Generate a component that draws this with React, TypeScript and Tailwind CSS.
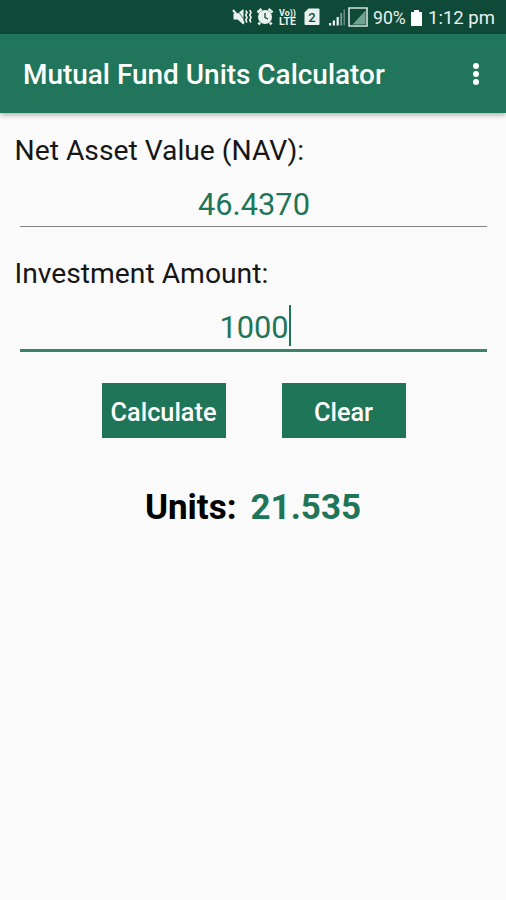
function StatusIcons() {
  return (
    <svg width={137} height={22} viewBox="231 7 137 22" fill="#e9f2ee">
      {/* muted + vibrate */}
      <path d="M233.500 14.500h4l6-4.500v15.500l-6-5h-4z" />
      <path d="M236 9.500l8.500 11.500" stroke="#0f4a38" strokeWidth={0.7} />
      <path d="M233 11l11 13.500" stroke="#e9f2ee" strokeWidth={2} />
      <path d="M245.800 11.500l1.200 2-1.200 2.500 1.200 2.500-1.200 2.500 1.200 2.500M249.800 11l1.200 2.500-1.200 2.500 1.200 2.500-1.200 2.500 1.200 2.500" fill="none" stroke="#e9f2ee" strokeWidth={1.700} />
      {/* alarm */}
      <circle cx={265} cy={18} r={7} />
      <path d="M257.500 13.500l4-3.500M272.500 13.500l-4-3.500M260 23.500l-1.500 2M270 23.500l1.500 2" stroke="#e9f2ee" strokeWidth={2.600} />
      <path d="M265 14v4.500l3 1.500" fill="none" stroke="#0f4a38" strokeWidth={1.3} />
      {/* volte */}
      <text x={279} y={16.500} fontSize={8.500} fontWeight={700} fontFamily="Roboto, sans-serif" textLength={17} lengthAdjust="spacingAndGlyphs">Vo))</text>
      <text x={279} y={26.300} fontSize={10} fontWeight={700} fontFamily="Roboto, sans-serif" textLength={17} lengthAdjust="spacingAndGlyphs">LTE</text>
      {/* sim 2 */}
      <path d="M308.500 9.500h10q1 0 1 1v14.500q0 1-1 1h-13q-1 0-1-1V13.500z" />
      <text x={312} y={22.500} fontSize={13} fontWeight={500} fontFamily="Roboto, sans-serif" textAnchor="middle" fill="#0f4a38">2</text>
      {/* signal bars */}
      <path d="M329 24h2.200v2.500H329zM332.800 21.500h2.200v5h-2.200zM336.600 18h2.200v8.500h-2.200z" />
      <path d="M340.300 14h1.800V26.500h-1.800zM343.600 10.500h1.200V26.500h-1.200z" opacity={0.5} />
      <path d="M349 9h18v18h-18z" fill="none" stroke="#d5e3dd" strokeWidth={1.600} />
      <path d="M352.500 25.500l13-14v14z" fill="#72a28f" />
    </svg>
  );
}

function StatusBar() {
  return (
    <div className="flex h-[34px] items-center bg-[#0f4a38] pl-[231px] text-[#e9f2ee]">
      <StatusIcons />
      <span className="ml-[5px] w-[34px] origin-left scale-x-[0.93] pt-[2px] text-[19px] leading-[34px]">90%</span>
      <svg className="mt-[2px] ml-[4px]" width={11} height={16} viewBox="0 0 11 16" fill="#ffffff">
        <path d="M3 0h5v2h3v14H0V2h3z" />
      </svg>
      <span className="ml-[6px] origin-left scale-x-[0.975] pt-[2px] text-[19px] leading-[34px] whitespace-nowrap">1:12 pm</span>
    </div>
  );
}

function Field({ label, value, focused = false }: { label: string; value: string; focused?: boolean }) {
  return (
    <div className="h-[123px]">
      <div className="pl-[14.500px] text-[28.250px] leading-[34px] text-[#161616]">{label}</div>
      <div
        className={
          focused
            ? "mr-[19px] ml-[20px] mt-[15px] flex h-[46px] justify-center border-b-[3px] border-[#3a8268]"
            : "mr-[19px] ml-[20px] mt-[15px] flex h-[44px] justify-center border-b border-[#858585]"
        }
      >
        <span className="pl-[1px] text-[30.800px] leading-[43px] text-[#1f7558]">{value}</span>
        {focused && <span className="-mt-[1px] -mr-[2px] h-[41px] w-[2px] bg-[#1f7558]" />}
      </div>
    </div>
  );
}

export default function App() {
  return (
    <div className="h-[900px] w-[506px] overflow-hidden bg-[#fafafa] font-['Roboto',sans-serif]">
      <StatusBar />
      <header className="flex h-[79px] items-center justify-between bg-[#20755a] pr-[26px] pl-[23px] shadow-[0_2px_5px_rgba(0,0,0,0.3)]">
        <h1 className="pt-[2px] text-[27.950px] font-medium whitespace-nowrap text-white">Mutual Fund Units Calculator</h1>
        <svg width={8} height={24} viewBox="0 0 8 24" fill="#ffffff">
          <circle cx={4} cy={4} r={3} />
          <circle cx={4} cy={12} r={3} />
          <circle cx={4} cy={20} r={3} />
        </svg>
      </header>
      <main className="pt-[21px]">
        <Field label="Net Asset Value (NAV):" value="46.4370" />
        <Field label="Investment Amount:" value="1000" focused />
        <div className="mt-[3px] flex justify-center gap-[56px] pl-[1px]">
          <button className="h-[55px] w-[124px] bg-[#1f7558] pt-[4px] text-[25.300px] font-medium text-white">Calculate</button>
          <button className="h-[55px] w-[124px] bg-[#1f7558] pt-[4px] text-[25.300px] font-medium text-white">Clear</button>
        </div>
        <div className="mt-[49px] flex justify-center gap-[14px] text-[35px] leading-[42px] font-bold">
          <span className="text-black">Units:</span>
          <span className="text-[#1f7558]">21.535</span>
        </div>
      </main>
    </div>
  );
}
